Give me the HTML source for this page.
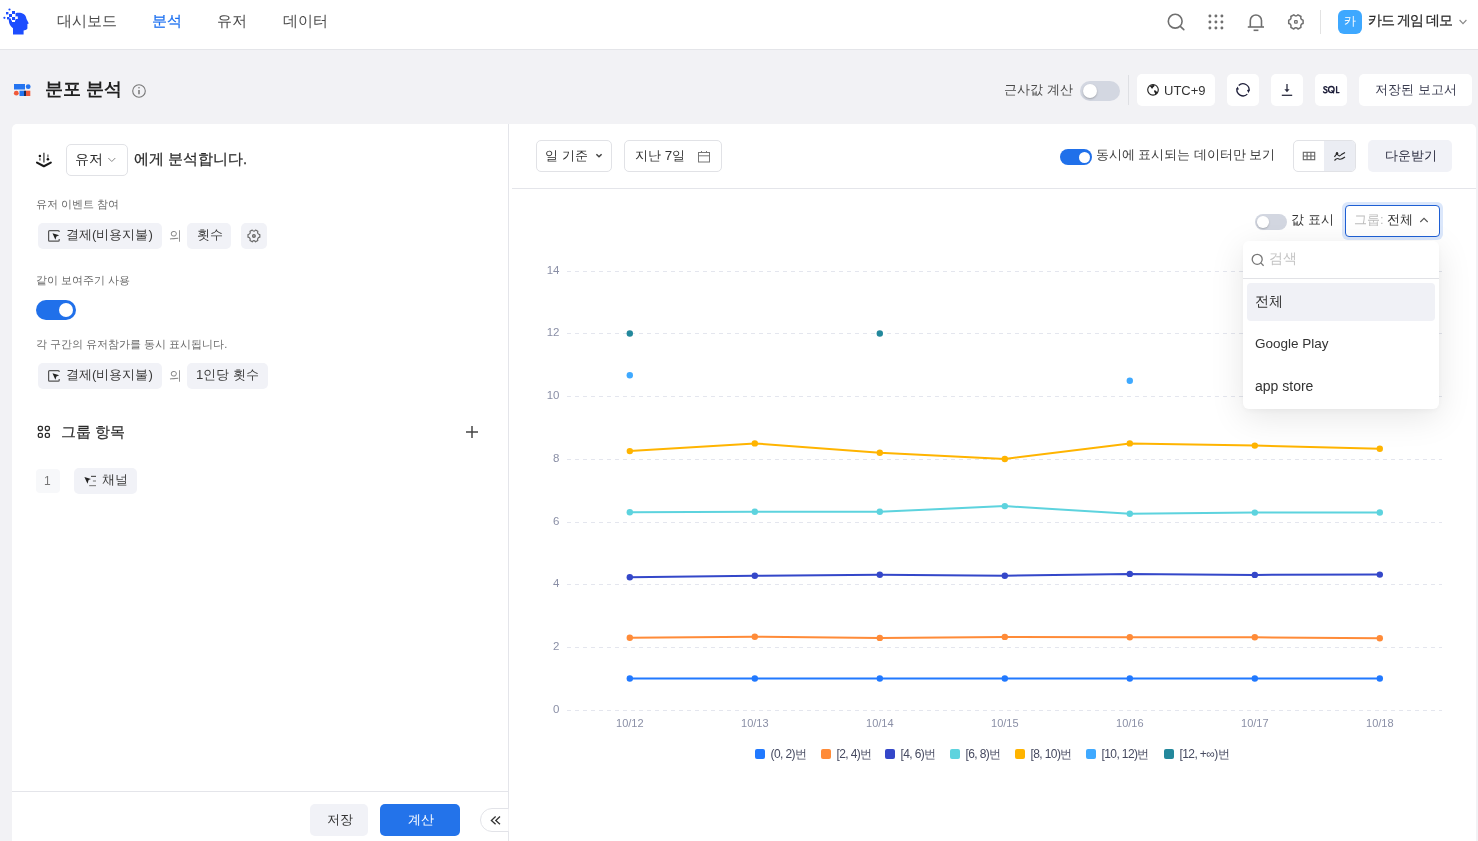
<!DOCTYPE html>
<html lang="ko">
<head>
<meta charset="utf-8">
<style>
*{box-sizing:border-box;margin:0;padding:0}
html,body{width:1478px;height:841px;overflow:hidden}
body{background:#f2f2f5;font-family:"Liberation Sans",sans-serif;position:relative;color:#333}
.a{position:absolute}
.t{position:absolute;white-space:nowrap;line-height:1;will-change:transform}
#hdr{left:0;top:0;width:1478px;height:50px;background:#fff;border-bottom:1px solid #e4e5e9}
.nav{font-size:15px;color:#4a4a4a;top:13px}
.ico{position:absolute;overflow:visible}
.tb{position:absolute;top:74px;height:32px;background:#fff;border-radius:5px}
.panel{position:absolute;background:#fff}
.chip{position:absolute;height:26px;background:#f1f2f7;border-radius:5px}
.lbl{font-size:11px;color:#6b6b6b}
.ct{font-size:13.2px;color:#3a3a3a}
.ax{font-family:"Liberation Sans",sans-serif;font-size:11.5px;fill:#8a8fa6}
.lg{position:absolute;top:749px;height:11px;white-space:nowrap;will-change:transform}
.lg i{position:absolute;left:0;top:0.4px;width:10px;height:10px;border-radius:2px}
.lg span{position:absolute;left:15.5px;top:-1px;font-size:12px;line-height:12px;color:#464a60;letter-spacing:-0.6px}
.tog{position:absolute;border-radius:20px}
.knob{position:absolute;background:#fff;border-radius:50%}
</style>
</head>
<body>
<!-- HEADER -->
<div id="hdr" class="a"></div>
<svg class="ico" style="left:0;top:0" width="40" height="40" viewBox="0 0 40 40">
  <g fill="#1d4dff">
    <path d="M15.5 13.2 C18 12.6 21.5 12.6 23.6 14 C25.6 15.3 26.2 17.3 26.5 19 L28.8 23.4 L27.4 23.9 L27.4 28.2 C27.4 29.3 26 30 24.5 30.2 L23.6 30.4 L23.6 34.6 L13 34.6 L13 28.3 C10.6 26.2 9 24 8.8 20.5 L8.8 18.4 L11 18.4 L11 20.4 L15.5 20.4 Z"/>
    <rect x="12" y="11" width="3" height="3"/>
    <rect x="9" y="14" width="3" height="3"/>
    <rect x="12" y="17" width="3" height="3"/>
    <rect x="6" y="12" width="2.4" height="2.4"/>
    <rect x="7" y="17" width="2.4" height="2.4"/>
    <circle cx="9.5" cy="9.5" r="1.1"/>
    <circle cx="4.4" cy="17.8" r="1.1"/>
  </g>
  <g fill="#fff">
    <rect x="12" y="14" width="3" height="3"/>
    <rect x="15.2" y="16.4" width="2.6" height="2.6"/>
    <rect x="12" y="20" width="3" height="2"/>
  </g>
</svg>
<div class="t nav" id="n1" style="left:57px">대시보드</div>
<div class="t nav" id="n2" style="left:152px;color:#1a6ff0;-webkit-text-stroke:0.2px #1a6ff0">분석</div>
<div class="t nav" id="n3" style="left:217px">유저</div>
<div class="t nav" id="n4" style="left:283px">데이터</div>

<svg class="ico" style="left:1160px;top:5px" width="160" height="35" viewBox="1160 5 160 35" fill="none" stroke="#6f6f6f" stroke-width="1.6">
  <circle cx="1175.2" cy="21.2" r="6.9"/>
  <line x1="1180.3" y1="26.3" x2="1183.8" y2="29.6" stroke-linecap="round"/>
  <g fill="#6f6f6f" stroke="none">
    <circle cx="1209.9" cy="16" r="1.45"/><circle cx="1215.9" cy="16" r="1.45"/><circle cx="1221.9" cy="16" r="1.45"/>
    <circle cx="1209.9" cy="22" r="1.45"/><circle cx="1215.9" cy="22" r="1.45"/><circle cx="1221.9" cy="22" r="1.45"/>
    <circle cx="1209.9" cy="28" r="1.45"/><circle cx="1215.9" cy="28" r="1.45"/><circle cx="1221.9" cy="28" r="1.45"/>
  </g>
  <path d="M1250.3 27 V20.6 A5.6 5.6 0 0 1 1261.5 20.6 V27"/>
  <line x1="1247.8" y1="27" x2="1264" y2="27"/>
  <line x1="1253.6" y1="30.3" x2="1258.4" y2="30.3"/>
  <path d="M1303.10 20.20 L1303.10 23.60 Q1300.06 24.30 1300.97 27.30 L1298.03 29.00 Q1295.90 26.70 1293.77 29.00 L1290.83 27.30 Q1291.74 24.30 1288.70 23.60 L1288.70 20.20 Q1291.74 19.50 1290.83 16.50 L1293.77 14.80 Q1295.90 17.10 1298.03 14.80 L1300.97 16.50 Q1300.06 19.50 1303.10 20.20 Z" stroke-linejoin="round" stroke-width="1.5"/>
  <rect x="1294.65" y="20.65" width="2.5" height="2.5" rx="0.5" stroke-width="1.3"/>
  <line x1="1320.5" y1="10" x2="1320.5" y2="34" stroke="#e3e3e3" stroke-width="1"/>
</svg>
<div class="a" style="left:1338px;top:10px;width:24px;height:24px;border-radius:6px;background:#3ea8ff"></div>
<div class="t" style="left:1344px;top:15px;font-size:12px;color:#fff">카</div>
<div class="t" id="proj" style="left:1368px;top:12.5px;font-size:14px;color:#2a2a2a;letter-spacing:-1px;-webkit-text-stroke:0.25px #2a2a2a">카드 게임 데모</div>
<svg class="ico" style="left:1456px;top:16px" width="14" height="12" viewBox="0 0 14 12"><path d="M3.6 4 L7 7.6 L10.4 4" fill="none" stroke="#888" stroke-width="1.1"/></svg>

<!-- TITLE ROW -->
<svg class="ico" style="left:12px;top:82px" width="22" height="16" viewBox="0 0 22 16">
  <rect x="2" y="2" width="11" height="5.5" fill="#2474f0"/>
  <circle cx="16.2" cy="4.7" r="2.4" fill="#2474f0"/>
  <circle cx="4.3" cy="11.2" r="2.4" fill="#f05a3a"/>
  <rect x="7.5" y="8.7" width="4.6" height="5.3" fill="#2474f0"/>
  <rect x="12" y="8.7" width="2" height="5.3" fill="#1f2a55"/>
  <rect x="14" y="8.7" width="4.3" height="5.3" fill="#f05a3a"/>
</svg>
<div class="t" id="title" style="left:45px;top:79.5px;font-size:18px;font-weight:bold;color:#1f1f1f">분포 분석</div>
<svg class="ico" style="left:130px;top:82px" width="18" height="18" viewBox="0 0 18 18" fill="none" stroke="#777" stroke-width="1.1">
  <circle cx="9" cy="9" r="6.3"/>
  <line x1="9" y1="8" x2="9" y2="12.2" stroke-width="1.5"/>
  <circle cx="9" cy="5.8" r="0.8" fill="#777" stroke="none"/>
</svg>

<div class="t" id="approx" style="left:1004px;top:83px;font-size:13px;color:#4a4a4a">근사값 계산</div>
<div class="tog" style="left:1080px;top:81px;width:40px;height:20px;background:#d3d7e1"></div>
<div class="knob" style="left:1083px;top:84px;width:14px;height:14px;box-shadow:0 1px 2px rgba(0,0,0,.25)"></div>
<div class="a" style="left:1128px;top:75px;width:1px;height:30px;background:#dedfe3"></div>
<div class="tb" style="left:1137px;width:78px"></div>
<svg class="ico" style="left:1145px;top:82px" width="16" height="16" viewBox="0 0 16 16" fill="none" stroke="#2b2d40" stroke-width="1.3">
  <circle cx="8" cy="7.8" r="5.3" stroke-width="1.15" stroke="#222"/>
  <path d="M4.6 4 Q6.5 2.7 9.8 3 L9.2 4.6 Q8 5 7.6 6.5 L6.6 6.4 Q6.1 5.3 4.6 4 Z" fill="#222" stroke="none"/>
  <path d="M9.2 8.2 Q10.4 8 11.4 9.2 Q12.4 10.2 12.3 11.2 Q11.2 12.4 10 13 Q10.4 11.6 9.6 10.6 Q8.8 9.6 9.2 8.2 Z" fill="#222" stroke="none"/>
</svg>
<div class="t" id="utc" style="left:1164px;top:84px;font-size:13px;color:#333">UTC+9</div>
<div class="tb" style="left:1227px;width:32px"></div>
<svg class="ico" style="left:1235px;top:82px" width="16" height="16" viewBox="0 0 16 16" fill="none" stroke="#2b2d40" stroke-width="1.5">
  <path d="M3.69 3.49 A6.1 6.1 0 0 1 13.9 9.2" stroke-width="1.3" stroke="#1e1f3a"/>
  <path d="M12.31 12.11 A6.1 6.1 0 0 1 2.1 6.4" stroke-width="1.3" stroke="#1e1f3a"/>
  <path d="M12 8.1 L14.9 7.6 L13.5 11.3 Z" fill="#1e1f3a" stroke="none"/>
  <path d="M1.1 7.6 L4.0 7.5 L2.5 4.6 Z" fill="#1e1f3a" stroke="none"/>
</svg>
<div class="tb" style="left:1271px;width:32px"></div>
<svg class="ico" style="left:1279px;top:82px" width="16" height="16" viewBox="0 0 16 16" fill="none" stroke="#2b2d40" stroke-width="1.4">
  <line x1="8" y1="2" x2="8" y2="8" stroke-width="1.3"/>
  <path d="M5.4 7.2 L10.6 7.2 L8 10.2 Z" fill="#2b2d40" stroke="none"/>
  <line x1="2.8" y1="13.3" x2="13.2" y2="13.3" stroke-width="1.3"/>
</svg>
<div class="tb" style="left:1315px;width:32px"></div>
<svg class="ico" style="left:0;top:0" width="1478" height="120" viewBox="0 0 1478 120" fill="none" stroke="#1e1f3a" stroke-width="1.35" stroke-linecap="round">
  <path d="M1327 87.4 Q1326.3 86.6 1325.3 86.6 Q1323.8 86.6 1323.8 87.9 Q1323.9 89 1325.4 89.5 Q1327.2 90.1 1327.1 91.4 Q1327 92.7 1325.3 92.7 Q1324.1 92.7 1323.5 91.8"/>
  <ellipse cx="1331.3" cy="89.6" rx="2.8" ry="3.05"/>
  <path d="M1331.9 90.6 L1333.6 92.9"/>
  <path d="M1336.6 86.6 V92.6 H1339"/>
</svg>
<div class="tb" style="left:1359px;width:113px"></div>
<div class="t" id="saved" style="left:1375px;top:83px;font-size:13px;color:#3a3c50">저장된 보고서</div>

<!-- LEFT PANEL -->
<div class="panel" style="left:12px;top:124px;width:497px;height:717px;border-radius:5px 0 0 0;border-right:1px solid #e4e5ea"></div>
<svg class="ico" style="left:30px;top:145px" width="30" height="30" viewBox="30 145 30 30" fill="none" stroke="#2a2a2a">
  <line x1="43.9" y1="152.8" x2="43.9" y2="162.6" stroke-width="1.5" stroke="#555"/>
  <circle cx="39.9" cy="155.9" r="1.25" fill="#111" stroke="none"/>
  <line x1="39.9" y1="158.3" x2="39.9" y2="160.6" stroke-width="1.5" stroke="#666"/>
  <line x1="47.9" y1="154.6" x2="47.9" y2="157.4" stroke-width="1.5" stroke="#777"/>
  <circle cx="47.9" cy="159.2" r="1.3" fill="#111" stroke="none"/>
  <path d="M37 162.6 L43.9 166.3 L50.8 162.6" stroke-width="2.1" stroke="#1a1a1a" stroke-linecap="round" stroke-linejoin="round"/>
</svg>
<div class="a" style="left:66px;top:144px;width:62px;height:32px;border:1px solid #e1e2e6;border-radius:5px"></div>
<div class="t" id="sel_user" style="left:75px;top:152px;font-size:14px;color:#2a2a2a">유저</div>
<svg class="ico" style="left:106px;top:155px" width="12" height="10" viewBox="0 0 12 10"><path d="M2.3 3 L5.8 6.5 L9.3 3" fill="none" stroke="#888" stroke-width="1"/></svg>
<div class="t" id="analyze" style="left:134px;top:151.5px;font-size:14.7px;color:#2a2a2a;-webkit-text-stroke:0.25px #2a2a2a">에게 분석합니다.</div>

<div class="t lbl" id="l1" style="left:36px;top:199px">유저 이벤트 참여</div>
<div class="chip" style="left:38px;top:223px;width:124px"></div>
<svg class="ico" style="left:44px;top:226px" width="20" height="20" viewBox="44 226 20 20" fill="none" stroke="#555" stroke-width="1.2">
  <path d="M59.2 232 V231.6 Q59.2 230.6 58.2 230.6 H49.6 Q48.6 230.6 48.6 231.6 V240.2 Q48.6 241.2 49.6 241.2 H58.2 Q59.2 241.2 59.2 240.2 V239"/>
  <path d="M52.5 233.3 L59.2 235.3 L56.4 236.4 L55.4 239.7 Z" fill="#222" stroke="none"/>
</svg>
<div class="t ct" id="c1" style="left:66px;top:228px">결제(비용지불)</div>
<div class="t" style="left:169px;top:229px;font-size:13px;color:#8a8a8a">의</div>
<div class="chip" style="left:187px;top:223px;width:44px"></div>
<div class="t ct" id="c2" style="left:197px;top:228px">횟수</div>
<div class="chip" style="left:241px;top:223px;width:26px"></div>
<svg class="ico" style="left:244px;top:226px" width="20" height="20" viewBox="244 226 20 20" fill="none" stroke="#6a6a6a" stroke-width="1.2">
  <path d="M259.80 234.60 L259.80 237.20 Q257.00 237.80 257.80 240.50 L255.55 241.80 Q253.90 239.60 252.25 241.80 L250.00 240.50 Q250.80 237.80 248.00 237.20 L248.00 234.60 Q250.80 234.00 250.00 231.30 L252.25 230.00 Q253.90 232.20 255.55 230.00 L257.80 231.30 Q257.00 234.00 259.80 234.60 Z" stroke-linejoin="round"/>
  <circle cx="253.9" cy="235.9" r="1.4" fill="#aaa"/>
</svg>

<div class="t lbl" id="l2" style="left:36px;top:275px">같이 보여주기 사용</div>
<div class="tog" style="left:36px;top:300px;width:40px;height:20px;background:#2070ea"></div>
<div class="knob" style="left:59px;top:303px;width:14px;height:14px"></div>

<div class="t lbl" id="l3" style="left:36px;top:339px">각 구간의 유저참가를 동시 표시됩니다.</div>
<div class="chip" style="left:38px;top:363px;width:124px"></div>
<svg class="ico" style="left:44px;top:366px" width="20" height="20" viewBox="44 226 20 20" fill="none" stroke="#555" stroke-width="1.2">
  <path d="M59.2 232 V231.6 Q59.2 230.6 58.2 230.6 H49.6 Q48.6 230.6 48.6 231.6 V240.2 Q48.6 241.2 49.6 241.2 H58.2 Q59.2 241.2 59.2 240.2 V239"/>
  <path d="M52.5 233.3 L59.2 235.3 L56.4 236.4 L55.4 239.7 Z" fill="#222" stroke="none"/>
</svg>
<div class="t ct" id="c3" style="left:66px;top:368px">결제(비용지불)</div>
<div class="t" style="left:169px;top:369px;font-size:13px;color:#8a8a8a">의</div>
<div class="chip" style="left:187px;top:363px;width:81px"></div>
<div class="t ct" id="c4" style="left:196px;top:368px">1인당 횟수</div>

<svg class="ico" style="left:34px;top:422px" width="20" height="20" viewBox="34 422 20 20" fill="none" stroke="#2a2a2a" stroke-width="1.3">
  <rect x="38.3" y="426.4" width="4.1" height="4.1" rx="1.4"/><rect x="45.3" y="426.4" width="4.1" height="4.1" rx="1.4"/>
  <rect x="38.3" y="433.3" width="4.1" height="4.1" rx="1.4"/><rect x="45.3" y="433.3" width="4.1" height="4.1" rx="1.4"/>
</svg>
<div class="t" id="grp" style="left:61px;top:424.5px;font-size:14.5px;color:#2a2a2a;-webkit-text-stroke:0.2px #2a2a2a">그룹 항목</div>
<svg class="ico" style="left:464px;top:424px" width="16" height="16" viewBox="0 0 16 16" stroke="#444" stroke-width="1.5"><line x1="8" y1="2" x2="8" y2="14"/><line x1="2" y1="8" x2="14" y2="8"/></svg>
<div class="a" style="left:36px;top:469px;width:24px;height:24px;background:#f7f8fa;border-radius:4px"></div>
<div class="t" style="left:44px;top:475px;font-size:12px;color:#777">1</div>
<div class="chip" style="left:74px;top:468px;width:63px"></div>
<svg class="ico" style="left:80px;top:470px" width="20" height="20" viewBox="80 470 20 20">
  <path d="M84.4 477 L91 479 L88.6 480 L87.5 483.7 Z" fill="#222"/>
  <g stroke="#555" stroke-width="1.2"><line x1="91" y1="476.4" x2="96" y2="476.4"/><line x1="92.9" y1="481" x2="96" y2="481" stroke="#888"/><line x1="89.2" y1="485.6" x2="96" y2="485.6" stroke="#888"/></g>
</svg>
<div class="t ct" id="c5" style="left:102px;top:473px">채널</div>

<div class="a" style="left:12px;top:791px;width:496px;height:1px;background:#e4e5ea"></div>
<div class="a" style="left:310px;top:804px;width:58px;height:32px;background:#f1f2f7;border-radius:5px"></div>
<div class="t" id="save" style="left:327px;top:813px;font-size:13px;color:#333">저장</div>
<div class="a" style="left:380px;top:804px;width:80px;height:32px;background:#2373ea;border-radius:5px"></div>
<div class="t" id="calc" style="left:408px;top:813px;font-size:13px;color:#fff">계산</div>
<div class="a" style="left:480px;top:808px;width:40px;height:24px;background:#fff;border:1px solid #e2e3e8;border-radius:12px;clip-path:inset(-2px 11.5px -2px -2px)"></div>
<svg class="ico" style="left:486px;top:812px" width="18" height="16" viewBox="486 812 18 16" fill="none" stroke="#333" stroke-width="1.3"><path d="M495.6 816.6 L491.4 820.4 L495.6 824.2"/><path d="M500 816.6 L495.8 820.4 L500 824.2"/></svg>

<!-- RIGHT PANEL -->
<div class="panel" style="left:509px;top:124px;width:967px;height:717px;border-radius:0 5px 0 0"></div>
<div class="a" style="left:512px;top:188px;width:964px;height:1px;background:#e4e5ea"></div>
<div class="a" style="left:536px;top:140px;width:76px;height:32px;border:1px solid #e1e2e6;border-radius:5px"></div>
<div class="t" id="daily" style="left:545px;top:149px;font-size:13px;color:#333">일 기준</div>
<svg class="ico" style="left:593px;top:151px" width="12" height="10" viewBox="0 0 12 10"><path d="M3.4 3.2 L6 5.8 L8.6 3.2" fill="none" stroke="#444" stroke-width="1.5"/></svg>
<div class="a" style="left:624px;top:140px;width:98px;height:32px;border:1px solid #e1e2e6;border-radius:5px"></div>
<div class="t" id="last7" style="left:635px;top:149px;font-size:13.4px;color:#333">지난 7일</div>
<svg class="ico" style="left:696px;top:149px" width="16" height="16" viewBox="0 0 16 16" fill="none" stroke="#777" stroke-width="1"><rect x="2.5" y="3.5" width="11" height="9.5"/><line x1="2.5" y1="6.8" x2="13.5" y2="6.8"/><line x1="5.5" y1="2" x2="5.5" y2="4"/><line x1="10.5" y1="2" x2="10.5" y2="4"/></svg>

<div class="tog" style="left:1060px;top:149px;width:32px;height:16px;background:#2070ea"></div>
<div class="knob" style="left:1078.5px;top:151.5px;width:11px;height:11px"></div>
<div class="t" id="sync" style="left:1096px;top:149px;font-size:12.5px;color:#3a3a3a">동시에 표시되는 데이터만 보기</div>
<div class="a" style="left:1293px;top:140px;width:63px;height:32px;border:1px solid #e1e2e6;border-radius:5px;overflow:hidden"><div class="a" style="left:30px;top:0;width:32px;height:30px;background:#ebedf3"></div></div>
<svg class="ico" style="left:1301px;top:148px" width="16" height="16" viewBox="0 0 16 16" fill="none" stroke="#666" stroke-width="1.1"><rect x="2.3" y="4.3" width="11.4" height="7.4"/><line x1="2.3" y1="8" x2="13.7" y2="8"/><line x1="6.1" y1="4.3" x2="6.1" y2="11.7"/><line x1="9.9" y1="4.3" x2="9.9" y2="11.7"/></svg>
<svg class="ico" style="left:1332px;top:148px" width="16" height="16" viewBox="0 0 16 16" fill="none" stroke="#2a2a2a" stroke-width="1.2"><path d="M2.5 9 Q4.5 5 6 7 Q7.5 9 9.5 6.5 L13 4.5"/><path d="M2.5 12.5 Q5 9.5 7 11 Q9 12 13 9"/><circle cx="5" cy="5.3" r="1.2" fill="#2a2a2a" stroke="none"/></svg>
<div class="a" style="left:1368px;top:140px;width:84px;height:32px;background:#f1f2f7;border-radius:5px"></div>
<div class="t" id="down" style="left:1385px;top:149px;font-size:13px;color:#2b2d40">다운받기</div>

<div class="tog" style="left:1255px;top:214px;width:32px;height:16px;background:#d3d7e1"></div>
<div class="knob" style="left:1257px;top:216px;width:11.5px;height:11.5px;box-shadow:0 1px 2px rgba(0,0,0,.2)"></div>
<div class="t" id="valshow" style="left:1291px;top:213px;font-size:13px;color:#333">값 표시</div>
<div class="a" style="left:1342px;top:202px;width:101px;height:38px;border-radius:6px;background:#dbe7fb"></div>
<div class="a" style="left:1345px;top:205px;width:95px;height:32px;border:1.5px solid #1e5fd4;border-radius:4px;background:#fff"></div>
<div class="t" id="grpsel" style="left:1354px;top:213px;font-size:13px;color:#bdbdbd">그룹: <span style="color:#333">전체</span></div>
<svg class="ico" style="left:1418px;top:215px" width="12" height="10" viewBox="0 0 12 10"><path d="M2.3 7 L6 3.3 L9.7 7" fill="none" stroke="#555" stroke-width="1.1"/></svg>

<!-- CHART -->
<svg class="ico" style="left:0;top:0" width="1478" height="841" viewBox="0 0 1478 841">
<line x1="567" y1="710.5" x2="1442" y2="710.5" stroke="#e4e6ee" stroke-width="1" stroke-dasharray="4 4"/>
<line x1="567" y1="647.5" x2="1442" y2="647.5" stroke="#e4e6ee" stroke-width="1" stroke-dasharray="4 4"/>
<line x1="567" y1="584.5" x2="1442" y2="584.5" stroke="#e4e6ee" stroke-width="1" stroke-dasharray="4 4"/>
<line x1="567" y1="522.5" x2="1442" y2="522.5" stroke="#e4e6ee" stroke-width="1" stroke-dasharray="4 4"/>
<line x1="567" y1="459.5" x2="1442" y2="459.5" stroke="#e4e6ee" stroke-width="1" stroke-dasharray="4 4"/>
<line x1="567" y1="396.5" x2="1442" y2="396.5" stroke="#e4e6ee" stroke-width="1" stroke-dasharray="4 4"/>
<line x1="567" y1="333.5" x2="1442" y2="333.5" stroke="#e4e6ee" stroke-width="1" stroke-dasharray="4 4"/>
<line x1="567" y1="271.5" x2="1442" y2="271.5" stroke="#e4e6ee" stroke-width="1" stroke-dasharray="4 4"/>
<polyline points="629.8,678.5 754.8,678.5 879.8,678.5 1004.8,678.5 1129.8,678.5 1254.8,678.5 1379.8,678.5" fill="none" stroke="#2179ff" stroke-width="2" stroke-linejoin="round"/>
<circle cx="629.8" cy="678.5" r="3.2" fill="#2179ff"/>
<circle cx="754.8" cy="678.5" r="3.2" fill="#2179ff"/>
<circle cx="879.8" cy="678.5" r="3.2" fill="#2179ff"/>
<circle cx="1004.8" cy="678.5" r="3.2" fill="#2179ff"/>
<circle cx="1129.8" cy="678.5" r="3.2" fill="#2179ff"/>
<circle cx="1254.8" cy="678.5" r="3.2" fill="#2179ff"/>
<circle cx="1379.8" cy="678.5" r="3.2" fill="#2179ff"/>
<polyline points="629.8,637.8 754.8,636.7 879.8,637.9 1004.8,636.9 1129.8,637.3 1254.8,637.3 1379.8,638.3" fill="none" stroke="#ff8b38" stroke-width="2" stroke-linejoin="round"/>
<circle cx="629.8" cy="637.8" r="3.2" fill="#ff8b38"/>
<circle cx="754.8" cy="636.7" r="3.2" fill="#ff8b38"/>
<circle cx="879.8" cy="637.9" r="3.2" fill="#ff8b38"/>
<circle cx="1004.8" cy="636.9" r="3.2" fill="#ff8b38"/>
<circle cx="1129.8" cy="637.3" r="3.2" fill="#ff8b38"/>
<circle cx="1254.8" cy="637.3" r="3.2" fill="#ff8b38"/>
<circle cx="1379.8" cy="638.3" r="3.2" fill="#ff8b38"/>
<polyline points="629.8,577.2 754.8,575.7 879.8,574.7 1004.8,575.7 1129.8,573.9 1254.8,574.9 1379.8,574.6" fill="none" stroke="#3447c9" stroke-width="2" stroke-linejoin="round"/>
<circle cx="629.8" cy="577.2" r="3.2" fill="#3447c9"/>
<circle cx="754.8" cy="575.7" r="3.2" fill="#3447c9"/>
<circle cx="879.8" cy="574.7" r="3.2" fill="#3447c9"/>
<circle cx="1004.8" cy="575.7" r="3.2" fill="#3447c9"/>
<circle cx="1129.8" cy="573.9" r="3.2" fill="#3447c9"/>
<circle cx="1254.8" cy="574.9" r="3.2" fill="#3447c9"/>
<circle cx="1379.8" cy="574.6" r="3.2" fill="#3447c9"/>
<polyline points="629.8,512.2 754.8,511.8 879.8,511.8 1004.8,506.1 1129.8,513.8 1254.8,512.6 1379.8,512.5" fill="none" stroke="#5dd3de" stroke-width="2" stroke-linejoin="round"/>
<circle cx="629.8" cy="512.2" r="3.2" fill="#5dd3de"/>
<circle cx="754.8" cy="511.8" r="3.2" fill="#5dd3de"/>
<circle cx="879.8" cy="511.8" r="3.2" fill="#5dd3de"/>
<circle cx="1004.8" cy="506.1" r="3.2" fill="#5dd3de"/>
<circle cx="1129.8" cy="513.8" r="3.2" fill="#5dd3de"/>
<circle cx="1254.8" cy="512.6" r="3.2" fill="#5dd3de"/>
<circle cx="1379.8" cy="512.5" r="3.2" fill="#5dd3de"/>
<polyline points="629.8,451.1 754.8,443.4 879.8,452.7 1004.8,459.0 1129.8,443.4 1254.8,445.6 1379.8,448.7" fill="none" stroke="#ffb400" stroke-width="2" stroke-linejoin="round"/>
<circle cx="629.8" cy="451.1" r="3.2" fill="#ffb400"/>
<circle cx="754.8" cy="443.4" r="3.2" fill="#ffb400"/>
<circle cx="879.8" cy="452.7" r="3.2" fill="#ffb400"/>
<circle cx="1004.8" cy="459.0" r="3.2" fill="#ffb400"/>
<circle cx="1129.8" cy="443.4" r="3.2" fill="#ffb400"/>
<circle cx="1254.8" cy="445.6" r="3.2" fill="#ffb400"/>
<circle cx="1379.8" cy="448.7" r="3.2" fill="#ffb400"/>
<circle cx="629.8" cy="375.3" r="3.2" fill="#3fa9ff"/>
<circle cx="1129.8" cy="380.7" r="3.2" fill="#3fa9ff"/>
<circle cx="629.8" cy="333.5" r="3.2" fill="#23889c"/>
<circle cx="879.8" cy="333.5" r="3.2" fill="#23889c"/>
<text x="559.5" y="712.7" text-anchor="end" class="ax">0</text>
<text x="559.5" y="649.7" text-anchor="end" class="ax">2</text>
<text x="559.5" y="586.7" text-anchor="end" class="ax">4</text>
<text x="559.5" y="524.7" text-anchor="end" class="ax">6</text>
<text x="559.5" y="461.7" text-anchor="end" class="ax">8</text>
<text x="559.5" y="398.7" text-anchor="end" class="ax">10</text>
<text x="559.5" y="335.7" text-anchor="end" class="ax">12</text>
<text x="559.5" y="273.7" text-anchor="end" class="ax">14</text>
<text x="629.8" y="726.6" text-anchor="middle" class="ax" style="font-size:11px">10/12</text>
<text x="754.8" y="726.6" text-anchor="middle" class="ax" style="font-size:11px">10/13</text>
<text x="879.8" y="726.6" text-anchor="middle" class="ax" style="font-size:11px">10/14</text>
<text x="1004.8" y="726.6" text-anchor="middle" class="ax" style="font-size:11px">10/15</text>
<text x="1129.8" y="726.6" text-anchor="middle" class="ax" style="font-size:11px">10/16</text>
<text x="1254.8" y="726.6" text-anchor="middle" class="ax" style="font-size:11px">10/17</text>
<text x="1379.8" y="726.6" text-anchor="middle" class="ax" style="font-size:11px">10/18</text>
</svg>
<div class="lg" style="left:755px"><i style="background:#2179ff"></i><span>(0, 2)번</span></div><div class="lg" style="left:820.5px"><i style="background:#ff8b38"></i><span>[2, 4)번</span></div><div class="lg" style="left:885px"><i style="background:#3447c9"></i><span>[4, 6)번</span></div><div class="lg" style="left:950.4px"><i style="background:#5dd3de"></i><span>[6, 8)번</span></div><div class="lg" style="left:1015.2px"><i style="background:#ffb400"></i><span>[8, 10)번</span></div><div class="lg" style="left:1085.9px"><i style="background:#3fa9ff"></i><span>[10, 12)번</span></div><div class="lg" style="left:1164.4px"><i style="background:#23889c"></i><span>[12, +∞)번</span></div>

<!-- DROPDOWN -->
<div class="a" style="left:1243px;top:241px;width:196px;height:168px;background:#fff;border-radius:6px;box-shadow:0 8px 34px rgba(0,0,0,0.10),0 2px 6px rgba(0,0,0,0.04)"></div>
<svg class="ico" style="left:1250px;top:252px" width="16" height="16" viewBox="0 0 16 16" fill="none" stroke="#777" stroke-width="1.3"><circle cx="7.2" cy="7.3" r="5"/><line x1="10.8" y1="10.9" x2="13.6" y2="13.7"/></svg>
<div class="t" id="srch" style="left:1269px;top:252px;font-size:13.5px;color:#c4c4c4">검색</div>
<div class="a" style="left:1243px;top:278px;width:196px;height:1px;background:#e1e2e6"></div>
<div class="a" style="left:1247px;top:283px;width:188px;height:38px;background:#f0f1f6;border-radius:4px"></div>
<div class="t" id="all" style="left:1255px;top:294px;font-size:14px;color:#333">전체</div>
<div class="t" id="gp" style="left:1255px;top:337px;font-size:13.5px;color:#333">Google Play</div>
<div class="t" id="as" style="left:1255px;top:379px;font-size:14px;color:#333">app store</div>
</body>
</html>
